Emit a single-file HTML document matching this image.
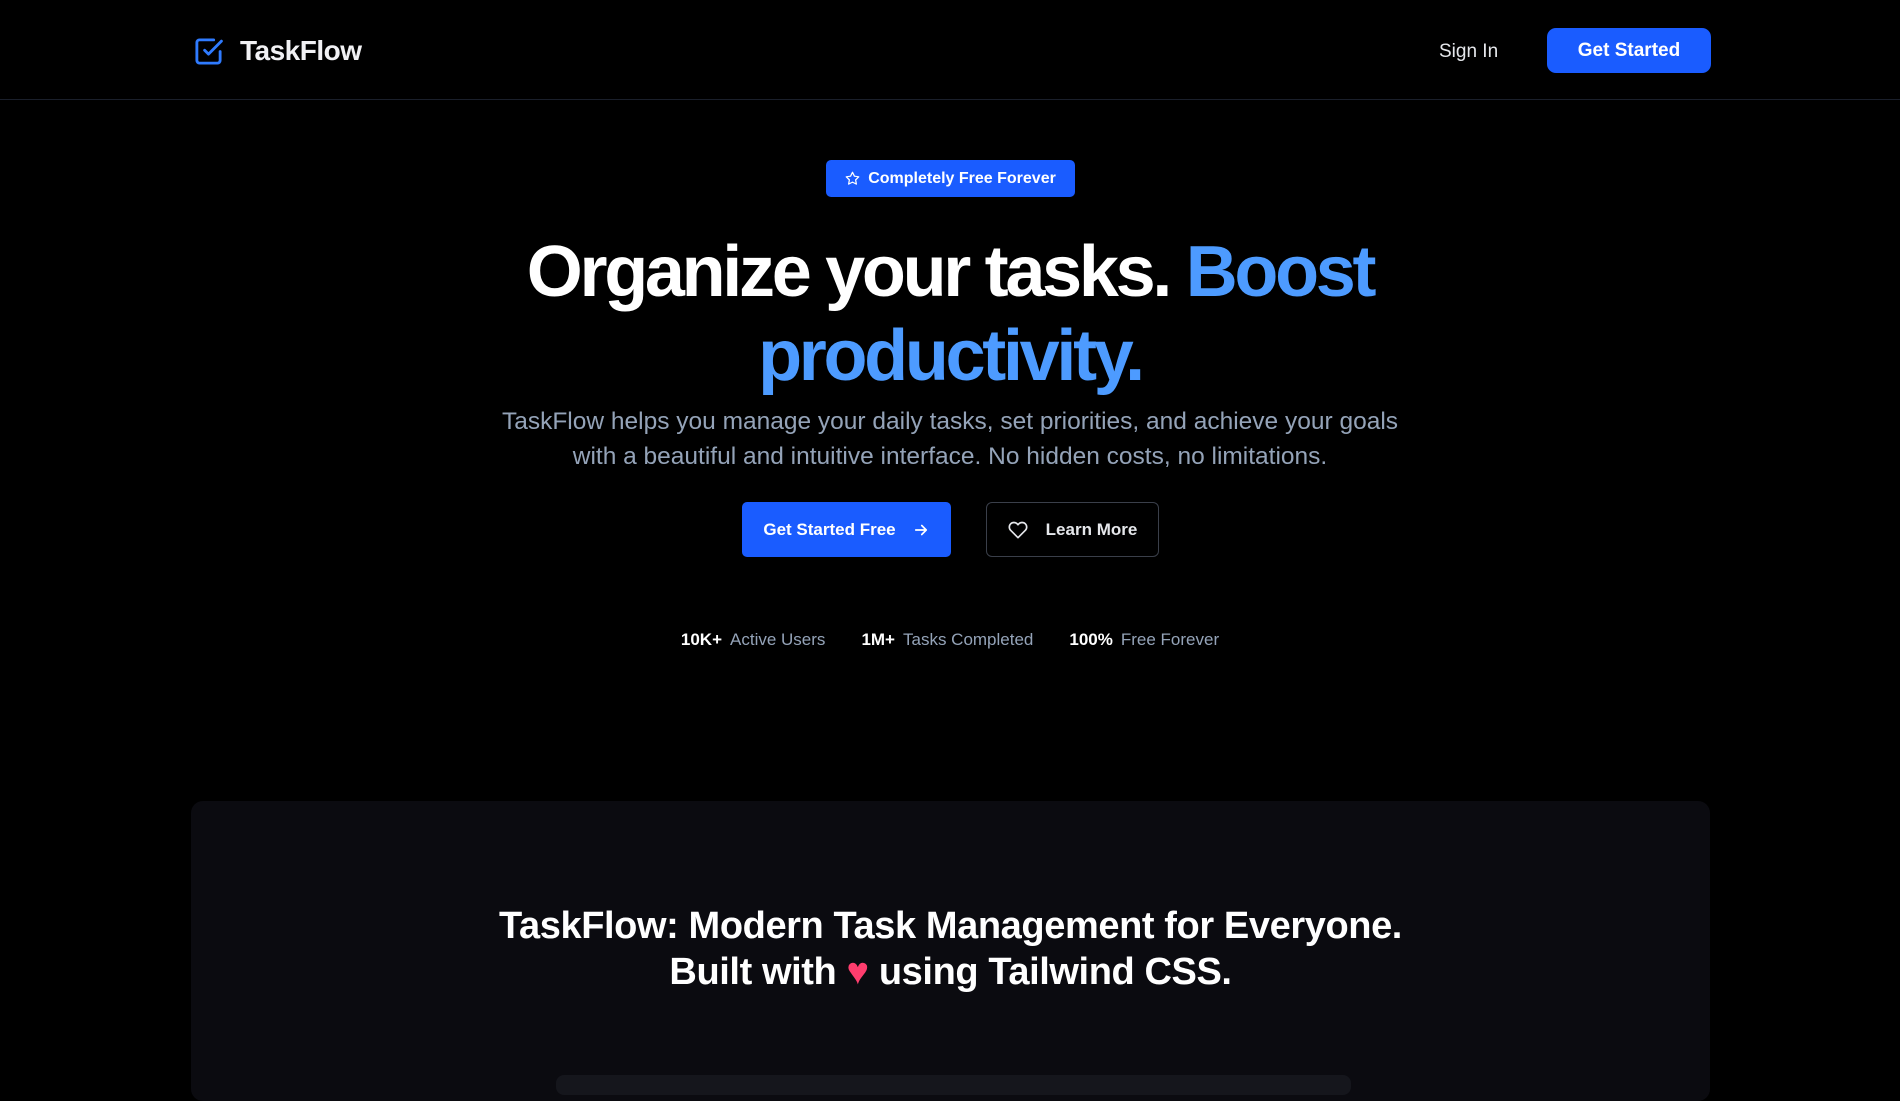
<!DOCTYPE html>
<html><head><meta charset="utf-8"><style>
*{margin:0;padding:0;box-sizing:border-box}
html,body{width:1900px;height:1079px;overflow:hidden;background:#000;font-family:"Liberation Sans",sans-serif;color:#fff}
.nav{position:absolute;left:0;top:0;width:1900px;height:100px;border-bottom:1px solid #1a1f2b}
.logo{position:absolute;left:193px;top:35px;display:flex;align-items:center}
.logo span{font-size:28px;font-weight:bold;margin-left:16px;color:#f1f1f4;letter-spacing:-0.5px}
.signin{position:absolute;left:1439px;top:41px;font-size:19px;color:#e5e7eb}
.gs{position:absolute;left:1547px;top:28px;width:164px;height:45px;background:#1a5cff;border-radius:9px;font-size:19px;font-weight:bold;text-align:center;line-height:45px}
.badge{position:absolute;left:826px;top:160px;width:249px;height:37px;background:#1a5cff;border-radius:5px;font-size:16px;font-weight:bold;display:flex;align-items:center;justify-content:center;gap:8px}
h1{position:absolute;left:0;width:1900px;top:230px;text-align:center;font-size:72px;line-height:84px;font-weight:bold;letter-spacing:-3.3px}
h1 .b{color:#4d9bff}
.sub{position:absolute;left:0;width:1900px;top:404px;text-align:center;font-size:24.5px;line-height:35px;color:#94a3b8}
.b1{position:absolute;left:742px;top:502px;width:209px;height:55px;background:#1a5cff;border-radius:5px;font-size:17px;font-weight:bold;display:flex;align-items:center;justify-content:center;gap:16px}
.b2{position:absolute;left:986px;top:502px;width:173px;height:55px;border:1px solid #3a3f4a;border-radius:6px;font-size:17px;font-weight:bold;display:flex;align-items:center;justify-content:center;gap:18px;color:#e5e7eb}
.stats{position:absolute;left:0;width:1900px;top:630px;text-align:center;font-size:17px;color:#94a3b8}
.stats b{color:#fff;margin-right:8px}
.stats span{margin:0 18px}
.card{position:absolute;left:191px;top:801px;width:1519px;height:300px;background:#0b0b10;border-radius:12px}
.card h2{position:absolute;left:0;width:1519px;top:102px;text-align:center;font-size:38px;line-height:46px;font-weight:bold;letter-spacing:-0.4px}
.inner{position:absolute;left:365px;top:274px;width:795px;height:20px;background:#15161c;border-radius:8px}
</style></head><body>
<div class="nav">
<div class="logo"><svg width="31" height="31" viewBox="0 0 24 24" fill="none" stroke="#2f7bff" stroke-width="2.2" stroke-linecap="round" stroke-linejoin="round"><path d="M9 11l3 3L22 4"/><path d="M21 12v7a2 2 0 0 1-2 2H5a2 2 0 0 1-2-2V5a2 2 0 0 1 2-2h11"/></svg><span>TaskFlow</span></div>
<div class="signin">Sign In</div>
<div class="gs">Get Started</div>
</div>
<div class="badge"><svg width="15" height="15" viewBox="0 0 24 24" fill="none" stroke="#fff" stroke-width="2" stroke-linejoin="round"><path d="M12 2l3.1 6.3 6.9 1-5 4.9 1.2 6.8L12 17.8 5.8 21l1.2-6.8-5-4.9 6.9-1z"/></svg>Completely Free Forever</div>
<h1>Organize your tasks. <span class="b">Boost<br>productivity.</span></h1>
<div class="sub">TaskFlow helps you manage your daily tasks, set priorities, and achieve your goals<br>with a beautiful and intuitive interface. No hidden costs, no limitations.</div>
<div class="b1">Get Started Free<svg width="18" height="18" viewBox="0 0 24 24" fill="none" stroke="#fff" stroke-width="2.2" stroke-linecap="round" stroke-linejoin="round"><path d="M5 12h14M13 6l6 6-6 6"/></svg></div>
<div class="b2"><svg width="20" height="20" viewBox="0 0 24 24" fill="none" stroke="#e5e7eb" stroke-width="2" stroke-linejoin="round"><path d="M20.8 4.6a5.5 5.5 0 0 0-7.8 0L12 5.7l-1-1.1a5.5 5.5 0 0 0-7.8 7.8L12 21.2l8.8-8.8a5.5 5.5 0 0 0 0-7.8z"/></svg>Learn More</div>
<div class="stats"><span><b>10K+</b>Active Users</span><span><b>1M+</b>Tasks Completed</span><span><b>100%</b>Free Forever</span></div>
<div class="card"><h2>TaskFlow: Modern Task Management for Everyone.<br>Built with <span style="color:#ff3d6e">&#9829;</span> using Tailwind CSS.</h2><div class="inner"></div></div>
</body></html>
